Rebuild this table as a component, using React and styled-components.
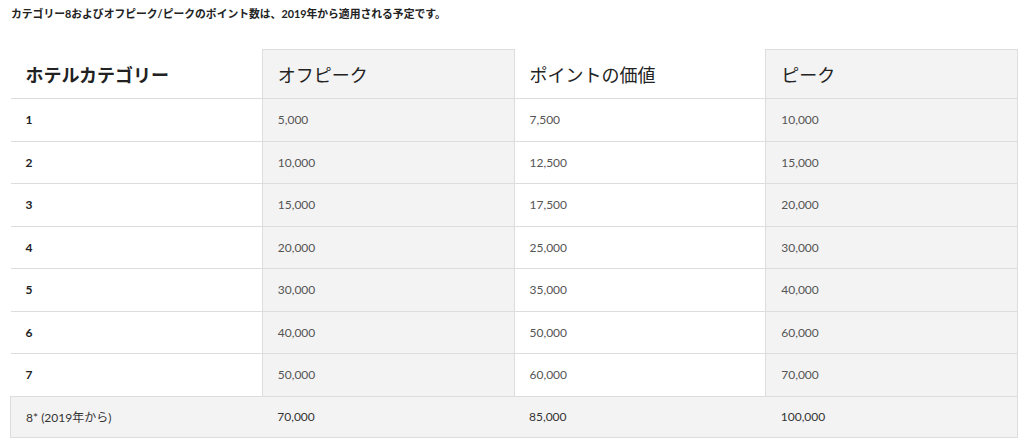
import React from 'react';
import styled, { createGlobalStyle } from 'styled-components';

const GlobalStyle = createGlobalStyle`
	body {
		margin: 0;
		background: #fff;
		font-family: Lato, 'Noto Sans CJK JP', sans-serif;
		color: #222;
	}
`;

const Page = styled.div`
	padding: 7px 6px 0 10px;
`;

const Note = styled.p`
	margin: 0 0 0 1px;
	font-size: 10.8px;
	line-height: 14px;
	font-weight: 700;
	color: #222;
`;

const Table = styled.table`
	margin-top: 28px;
	width: 1008px;
	border-collapse: collapse;
	table-layout: fixed;
`;

const HeadCell = styled.th`
	height: 48px;
	padding: 0 15px;
	text-align: left;
	font-size: 18px;
	font-weight: ${(p) => (p.$strong ? 700 : 400)};
	color: #222;
	border-bottom: 1px solid #ddd;
	background: ${(p) => (p.$shaded ? '#f3f3f3' : '#fff')};
	border-top: ${(p) => (p.$shaded ? '1px solid #ddd' : 'none')};
	border-left: ${(p) => (p.$shaded ? '1px solid #ddd' : 'none')};
	border-right: ${(p) => (p.$shaded ? '1px solid #ddd' : 'none')};
`;

const Cell = styled.td`
	height: 41.5px;
	padding: 0 15px;
	font-size: 12px;
	font-weight: ${(p) => (p.$strong ? 700 : 400)};
	color: ${(p) => (p.$strong ? '#222' : '#555')};
	border-bottom: 1px solid #ddd;
	background: ${(p) => (p.$shaded ? '#f3f3f3' : '#fff')};
	border-left: ${(p) => (p.$shaded ? '1px solid #ddd' : 'none')};
	border-right: ${(p) => (p.$shaded ? '1px solid #ddd' : 'none')};
`;

const FootRow = styled.tr`
	td {
		background: #f3f3f3;
		border-top: 1px solid #ddd;
		border-bottom: 1px solid #ddd;
		border-left: none;
		border-right: none;
		height: 40px;
		font-weight: 400;
		color: #333;
	}
	td:first-child {
		border-left: 1px solid #ddd;
	}
	td:last-child {
		border-right: 1px solid #ddd;
	}
`;

const rows = [
	['1', '5,000', '7,500', '10,000'],
	['2', '10,000', '12,500', '15,000'],
	['3', '15,000', '17,500', '20,000'],
	['4', '20,000', '25,000', '30,000'],
	['5', '30,000', '35,000', '40,000'],
	['6', '40,000', '50,000', '60,000'],
	['7', '50,000', '60,000', '70,000'],
];

export default function App() {
	return (
		<>
			<GlobalStyle />
			<Page>
				<Note>
					カテゴリー8およびオフピーク/ピークのポイント数は、2019年から適用される予定です。
				</Note>
				<Table>
					<thead>
						<tr>
							<HeadCell $strong>ホテルカテゴリー</HeadCell>
							<HeadCell $shaded>オフピーク</HeadCell>
							<HeadCell>ポイントの価値</HeadCell>
							<HeadCell $shaded>ピーク</HeadCell>
						</tr>
					</thead>
					<tbody>
						{rows.map((r) => (
							<tr key={r[0]}>
								<Cell $strong>{r[0]}</Cell>
								<Cell $shaded>{r[1]}</Cell>
								<Cell>{r[2]}</Cell>
								<Cell $shaded>{r[3]}</Cell>
							</tr>
						))}
						<FootRow>
							<Cell>8* (2019年から)</Cell>
							<Cell>70,000</Cell>
							<Cell>85,000</Cell>
							<Cell>100,000</Cell>
						</FootRow>
					</tbody>
				</Table>
			</Page>
		</>
	);
}
